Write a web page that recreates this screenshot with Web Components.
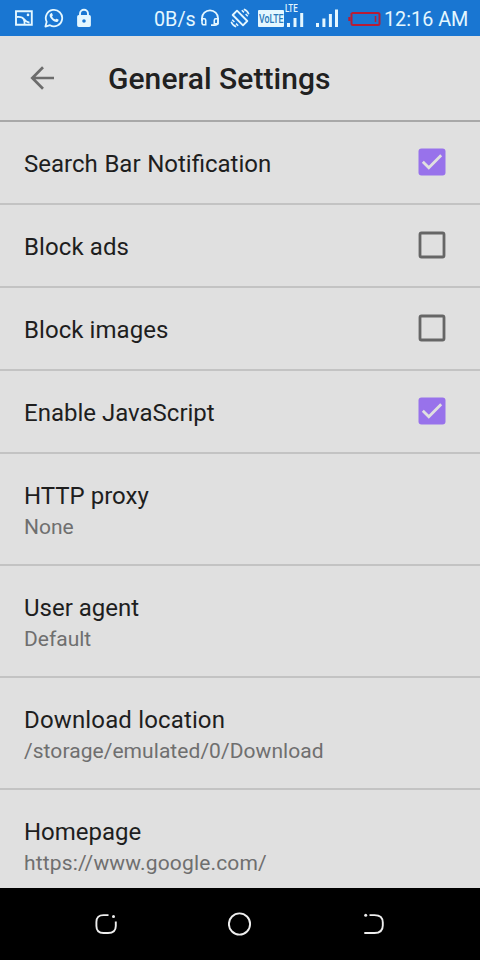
<!DOCTYPE html>
<html lang="en">
<head>
<meta charset="utf-8">
<title>General Settings</title>
<style>
html, body { margin: 0; height: 100%; }
body { font-family: Roboto, "Noto Sans", sans-serif; background: #e0e0e0; overflow: hidden; }
</style>
</head>
<body>
<settings-screen></settings-screen>
<script>
const define = (name, html, setup) => customElements.define(name, class extends HTMLElement {
  constructor() {
    super();
    const t = document.createElement('template');
    t.innerHTML = html;
    this.attachShadow({ mode: 'open' }).append(t.content.cloneNode(true));
  }
  connectedCallback() { if (setup) setup(this, this.shadowRoot); }
});

const GLYPHS = {
  image: [20, 18, '<path d="M2 2.2H17.8V15.8H2Z" fill="none" stroke="currentColor" stroke-width="1.900"/><path d="M3 8Q8 7.300 10.300 10.600Q11.800 13 15.500 13.700M9.800 10.500Q11 12.500 10.500 15" fill="none" stroke="currentColor" stroke-width="1.900"/><circle cx="14" cy="5.9" r="1.3"/>'],
  whatsapp: [20, 20, '<path d="M1.4 18.6L2.7 13.8A8.2 8.2 0 1 1 6 17.2Z" fill="none" stroke="currentColor" stroke-width="1.8" stroke-linejoin="round"/><path d="M7 5.2c.5-.3 1-.1 1.2.4l.6 1.6c.1.4-.5.9-.8 1.3.8 1.5 1.8 2.5 3.4 3.1.5-.5.8-1.1 1.3-.9l1.7.9c.6.3-.1 1.7-.8 2.1-1.4.7-3.3-.1-5-1.4-1.6-1.4-3.1-3.3-3-5 0-.8.6-1.6 1.4-2.100Z"/>'],
  lock: [16, 20, '<path d="M4 9V5.8a4 4 0 0 1 8 0V9" fill="none" stroke="currentColor" stroke-width="1.9"/><path fill-rule="evenodd" d="M2.800 7H13.200Q14.900 7 14.900 8.700V17.200Q14.900 19 13.200 19H2.800Q1.100 19 1.100 17.200V8.700Q1.100 7 2.800 7ZM8 11.200a1.800 1.800 0 1 0 0 3.600a1.800 1.800 0 1 0 0-3.600Z"/>'],
  headset: [20, 18, '<path d="M2 12V9a7.800 7.500 0 0 1 16 0V13Q18 16.200 14.500 16.200H11" fill="none" stroke="currentColor" stroke-width="1.800"/><path d="M2 9.800H4.200Q5.700 9.800 5.700 11.200V15.700H3.800Q2 15.700 2 13.700ZM18 9.800H15.800Q14.300 9.800 14.300 11.200V14.700H18Z" fill="none" stroke="currentColor" stroke-width="1.600"/>'],
  rotate: [22, 22, '<g fill="none" stroke="currentColor"><path d="M8 3.700L18.300 14L14 18.300L3.700 8Z" stroke-width="1.900" stroke-linejoin="round"/><path d="M12.800 3.200L15 5.400M14.800 2.200Q18.500 3.400 19.800 7.200M16.600 7L18.800 9.200" stroke-width="1.500"/><path d="M9.200 18.800L7 16.600M7.200 19.800Q3.500 18.600 2.200 14.800M5.400 15L3.200 12.800" stroke-width="1.500"/></g>'],
  bars3: [17, 16, '<path d="M0 12h3v4H0ZM6.500 7h3v9h-3ZM13.200 2h3v14h-3Z"/>'],
  bars4: [23, 18, '<path d="M0 14h3v4H0ZM6.400 9.500h3V18h-3ZM12.900 5h3v13h-3ZM19 0.500h3V18h-3Z"/>'],
  battery: [33, 16, '<path d="M3.500 2H30Q31.500 2 31.500 3.500V12.500Q31.500 14 30 14H5Q3.500 14 3.500 12.500V2M1.300 6V10" fill="none" stroke="currentColor" stroke-width="2"/><path d="M27.500 5V11" stroke="currentColor" stroke-width="1.500"/>'],
  back: [28, 28, '<path d="M26 14H4.500M15 3.300L4.300 14L15 24.700" fill="none" stroke="currentColor" stroke-width="2.700"/>'],
  recent: [24, 24, '<path d="M14.500 3.100H9.500Q2.400 3.100 2.400 10V14Q2.400 21 9.500 21H14Q21.800 21 21.800 14V9.500" fill="none" stroke="currentColor" stroke-width="1.900"/><circle cx="19.500" cy="4.500" r="1.500"/>'],
  home: [24, 24, '<circle cx="11.500" cy="12" r="10.600" fill="none" stroke="currentColor" stroke-width="1.900"/>'],
  return: [24, 24, '<path d="M7.500 3.100H12.500Q20.800 3.100 20.800 10.500V13.500Q20.800 21 12.500 21H2.300" fill="none" stroke="currentColor" stroke-width="1.900"/><circle cx="3.700" cy="3.200" r="1.500"/>']
};

define('app-icon', `<style>:host{display:block;flex:none;line-height:0}svg{display:block;fill:currentColor}</style><span></span>`, (el, root) => {
  const [w, h, art] = GLYPHS[el.getAttribute('name')];
  root.querySelector('span').innerHTML = `<svg width="${w}" height="${h}" viewBox="0 0 ${w} ${h}">${art}</svg>`;
});

define('volte-badge', `<style>
:host{display:flex;align-items:center;justify-content:center;box-sizing:border-box;width:26px;height:17px;background:#e4f7ff;border-radius:1px;color:#2b79b9;flex:none}
span{font:500 11px/16px Roboto,sans-serif;transform:scale(.8,1.2);white-space:nowrap}
</style><span><slot></slot></span>`);

define('lte-signal', `<style>
:host{display:block;position:relative;width:17px;height:16px;flex:none}
span{position:absolute;left:-2px;top:-7px;font:500 10.500px/10px Roboto,sans-serif;transform:scaleX(.76);transform-origin:left;white-space:nowrap}
</style><span><slot></slot></span><app-icon name="bars3"></app-icon>`);

define('status-bar', `<style>
:host{display:flex;height:36px;background:#1976d2;color:#e4f7ff;align-items:flex-start;padding-left:14px;box-sizing:border-box;flex:none}
.t{font-size:19.800px;line-height:24px;margin-top:8px;white-space:nowrap;flex:none}
</style>
<app-icon name="image" style="margin-top:9px"></app-icon>
<app-icon name="whatsapp" style="margin:8px 0 0 10px"></app-icon>
<app-icon name="lock" style="margin:8px 0 0 12px"></app-icon>
<span class="t" style="margin-left:62px;width:46px">0B/s</span>
<app-icon name="headset" style="margin-top:9px"></app-icon>
<app-icon name="rotate" style="margin:7px 0 0 9px"></app-icon>
<volte-badge style="margin:10px 0 0 7px">VoLTE</volte-badge>
<lte-signal style="margin:11px 0 0 3px">LTE</lte-signal>
<app-icon name="bars4" style="margin:9px 0 0 12px"></app-icon>
<app-icon name="battery" style="margin:11px 0 0 9px;color:#b71c35"></app-icon>
<span class="t" style="margin-left:3px">12:16 AM</span>`);

define('app-header', `<style>
:host{display:flex;height:86px;box-sizing:border-box;align-items:center;padding:0 0 0 28px;color:#212121;flex:none;border-bottom:2px solid #a8a8a8}
app-icon{color:#6c6c6c;margin-right:52px}
h1{margin:0;font-size:30px;font-weight:500;line-height:36px;letter-spacing:.06px;padding-top:2px;white-space:nowrap}
</style><app-icon name="back"></app-icon><h1><slot></slot></h1>`);

define('check-box', `<style>
:host{display:block;width:28px;height:28px;flex:none;margin-bottom:2px}svg{display:block}
.on{display:none}:host([checked]) .on{display:block}:host([checked]) .off{display:none}
</style>
<svg width="28" height="28" viewBox="0 0 28 28"><rect class="off" x="2" y="2" width="24" height="24" rx="1.500" fill="none" stroke="#666" stroke-width="2.800"/>
<g class="on"><rect x=".5" y=".5" width="27" height="27" rx="3" fill="#9872eb"/><path d="M4.800 13.700L10.800 19.700L23.200 7.300" fill="none" stroke="#e0e0e0" stroke-width="2.800"/></g></svg>`);

define('setting-row', `<style>
:host{display:flex;box-sizing:border-box;height:83px;align-items:center;justify-content:space-between;padding:0 34px 0 24px;border-bottom:2px solid #c3c3c3;flex:none}
:host([tall]){height:112px;padding-top:4px}
.label{font-size:24px;line-height:30px;letter-spacing:var(--label-track,0);color:#1e1e1e;white-space:nowrap;padding-top:2px}
.sub{font-size:21px;line-height:32px;letter-spacing:var(--value-track,0);color:#6f6f6f;white-space:nowrap}
:host(:not([tall])) .sub{display:none}
</style>
<div><div class="label"><slot></slot></div><div class="sub"><slot name="value"></slot></div></div><slot name="control"></slot>`);

define('nav-bar', `<style>
:host{display:flex;height:72px;background:#000;color:#eee;align-items:center;justify-content:space-between;padding:0 94px;box-sizing:border-box;flex:none}
</style><app-icon name="recent"></app-icon><app-icon name="home"></app-icon><app-icon name="return"></app-icon>`);

define('settings-screen', `<style>
:host{display:flex;flex-direction:column;width:480px;height:960px;background:#e0e0e0}
main{flex:1;min-height:0;overflow:hidden;display:flex;flex-direction:column}
</style>
<status-bar></status-bar>
<app-header>General Settings</app-header>
<main>
<setting-row style="word-spacing:.7px">Search Bar Notification<check-box slot="control" checked></check-box></setting-row>
<setting-row style="--label-track:.1px">Block ads<check-box slot="control"></check-box></setting-row>
<setting-row style="--label-track:.06px">Block images<check-box slot="control"></check-box></setting-row>
<setting-row>Enable JavaScript<check-box slot="control" checked></check-box></setting-row>
<setting-row tall>HTTP proxy<span slot="value">None</span></setting-row>
<setting-row tall>User agent<span slot="value">Default</span></setting-row>
<setting-row tall style="--label-track:.15px;--value-track:.06px">Download location<span slot="value">/storage/emulated/0/Download</span></setting-row>
<setting-row tall style="--value-track:.17px">Homepage<span slot="value">https://www.google.com/</span></setting-row>
</main>
<nav-bar></nav-bar>`);
</script>
</body>
</html>
